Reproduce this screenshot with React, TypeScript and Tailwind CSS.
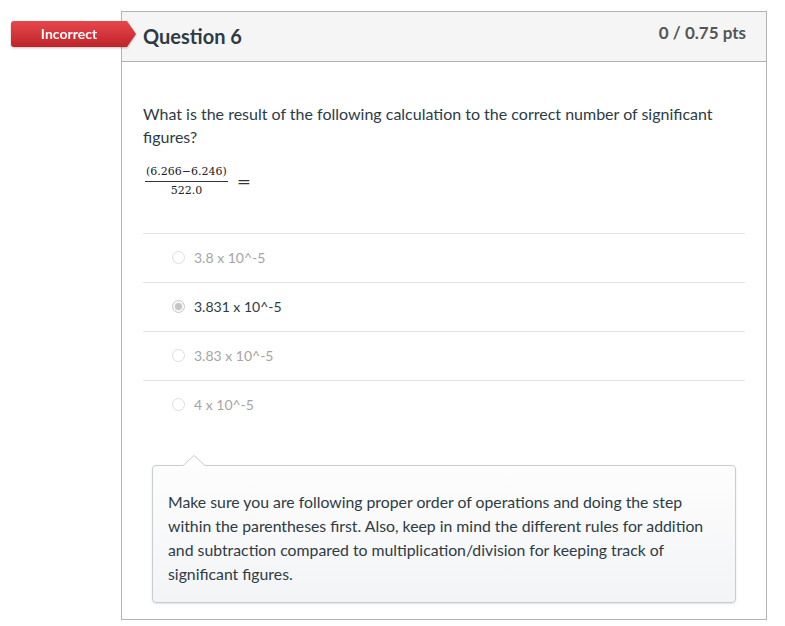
import React from 'react';

const answers = [
    { text: '3.8 x 10^-5', selected: false },
    { text: '3.831 x 10^-5', selected: true },
    { text: '3.83 x 10^-5', selected: false },
    { text: '4 x 10^-5', selected: false },
];

function Badge() {
    return (
        <div className="absolute left-[-111px] top-[9px] flex h-[26px] items-stretch drop-shadow-[0_1px_1px_rgba(0,0,0,0.25)]">
            <div className="flex w-[116px] items-center justify-center rounded-l-[3px] bg-gradient-to-b from-[#e8474c] to-[#bd232a] pb-[2px] text-[14px] font-bold text-white">
                Incorrect
            </div>
            <svg width="9" height="26" viewBox="0 0 9 26" className="block">
                <defs>
                    <linearGradient id="bg" x1="0" y1="0" x2="0" y2="1">
                        <stop offset="0" stopColor="#e8474c" />
                        <stop offset="1" stopColor="#bd232a" />
                    </linearGradient>
                </defs>
                <path d="M0 0 L9 13 L0 26 Z" fill="url(#bg)" />
            </svg>
        </div>
    );
}

function Fraction() {
    return (
        <div className="mt-[17px] flex items-center gap-[9px] pl-[2px]" style={{ fontFamily: '"DejaVu Serif", "Liberation Serif", serif' }}>
            <div className="flex flex-col items-center text-[11px] leading-[14px] text-[#222]">
                <span className="px-[1px] pb-[2px]">(6.266−6.246)</span>
                <span className="w-full border-t border-[#333] pt-[2px] text-center">522.0</span>
            </div>
            <span className="text-[17px] text-[#333]">=</span>
        </div>
    );
}

export default function App() {
    return (
        <div className="min-h-[626px] bg-white pl-[121px] pt-[11px]" style={{ fontFamily: 'Lato, "Open Sans", sans-serif' }}>
            <div className="relative w-[646px] border border-[#b4b4b4] bg-white">
                <Badge />
                <header className="flex h-[50px] items-start justify-between border-b border-[#b4b4b4] bg-[#f5f5f5] pl-[21px] pr-[20px]">
                    <h2 className="mt-[9px] text-[20px] font-bold text-[#2d3b45]">Question 6</h2>
                    <span className="mt-[8px] text-[17px] font-bold text-[#555]">0 / 0.75 pts</span>
                </header>
                <div className="px-[21px] pb-[16px] pt-[40px]">
                    <p className="text-[16px] leading-[23px] text-[#2d3b45]">
                        What is the result of the following calculation to the correct number of significant figures?
                    </p>
                    <Fraction />
                    <div className="mt-[35px]">
                        {answers.map((a) => (
                            <div key={a.text} className="flex h-[49px] items-center border-t border-[#e3e3e3] pl-[29px] pb-[1px]">
                                <span
                                    className={`mr-[9px] flex h-[13px] w-[13px] items-center justify-center rounded-full border ${a.selected ? 'border-[#c8c8c8] bg-[#f5f5f5]' : 'border-[#dedede] bg-white'}`}
                                >
                                    {a.selected && <span className="h-[7px] w-[7px] rounded-full bg-[#c4c4c4]" />}
                                </span>
                                <span className={`text-[14px] ${a.selected ? 'text-[#2d3b45]' : 'text-[#a5a5a5]'}`}>{a.text}</span>
                            </div>
                        ))}
                    </div>
                    <div className="relative mx-[9px] mt-[36px] rounded-[4px] border border-[#c7cdd1] bg-gradient-to-b from-[#fdfdfd] to-[#f3f4f6] pb-[16px] pl-[15px] pr-[20px] pt-[24px] shadow-[0_1px_2px_rgba(0,0,0,0.12)]">
                        <svg width="24" height="12" viewBox="0 0 24 12" className="absolute left-[29px] top-[-11px]">
                            <path d="M0 11.5 L12 0.5 L24 11.5" fill="#fdfdfd" stroke="#c7cdd1" strokeWidth="1" />
                            <rect x="0" y="11" width="24" height="2" fill="#fdfdfd" />
                        </svg>
                        <p className="text-[15.8px] leading-[24px] text-[#2d3b45]">
                            Make sure you are following proper order of operations and doing the step within the parentheses first. Also, keep in mind the different rules for addition and subtraction compared to multiplication/division for keeping track of significant figures.
                        </p>
                    </div>
                </div>
            </div>
        </div>
    );
}
